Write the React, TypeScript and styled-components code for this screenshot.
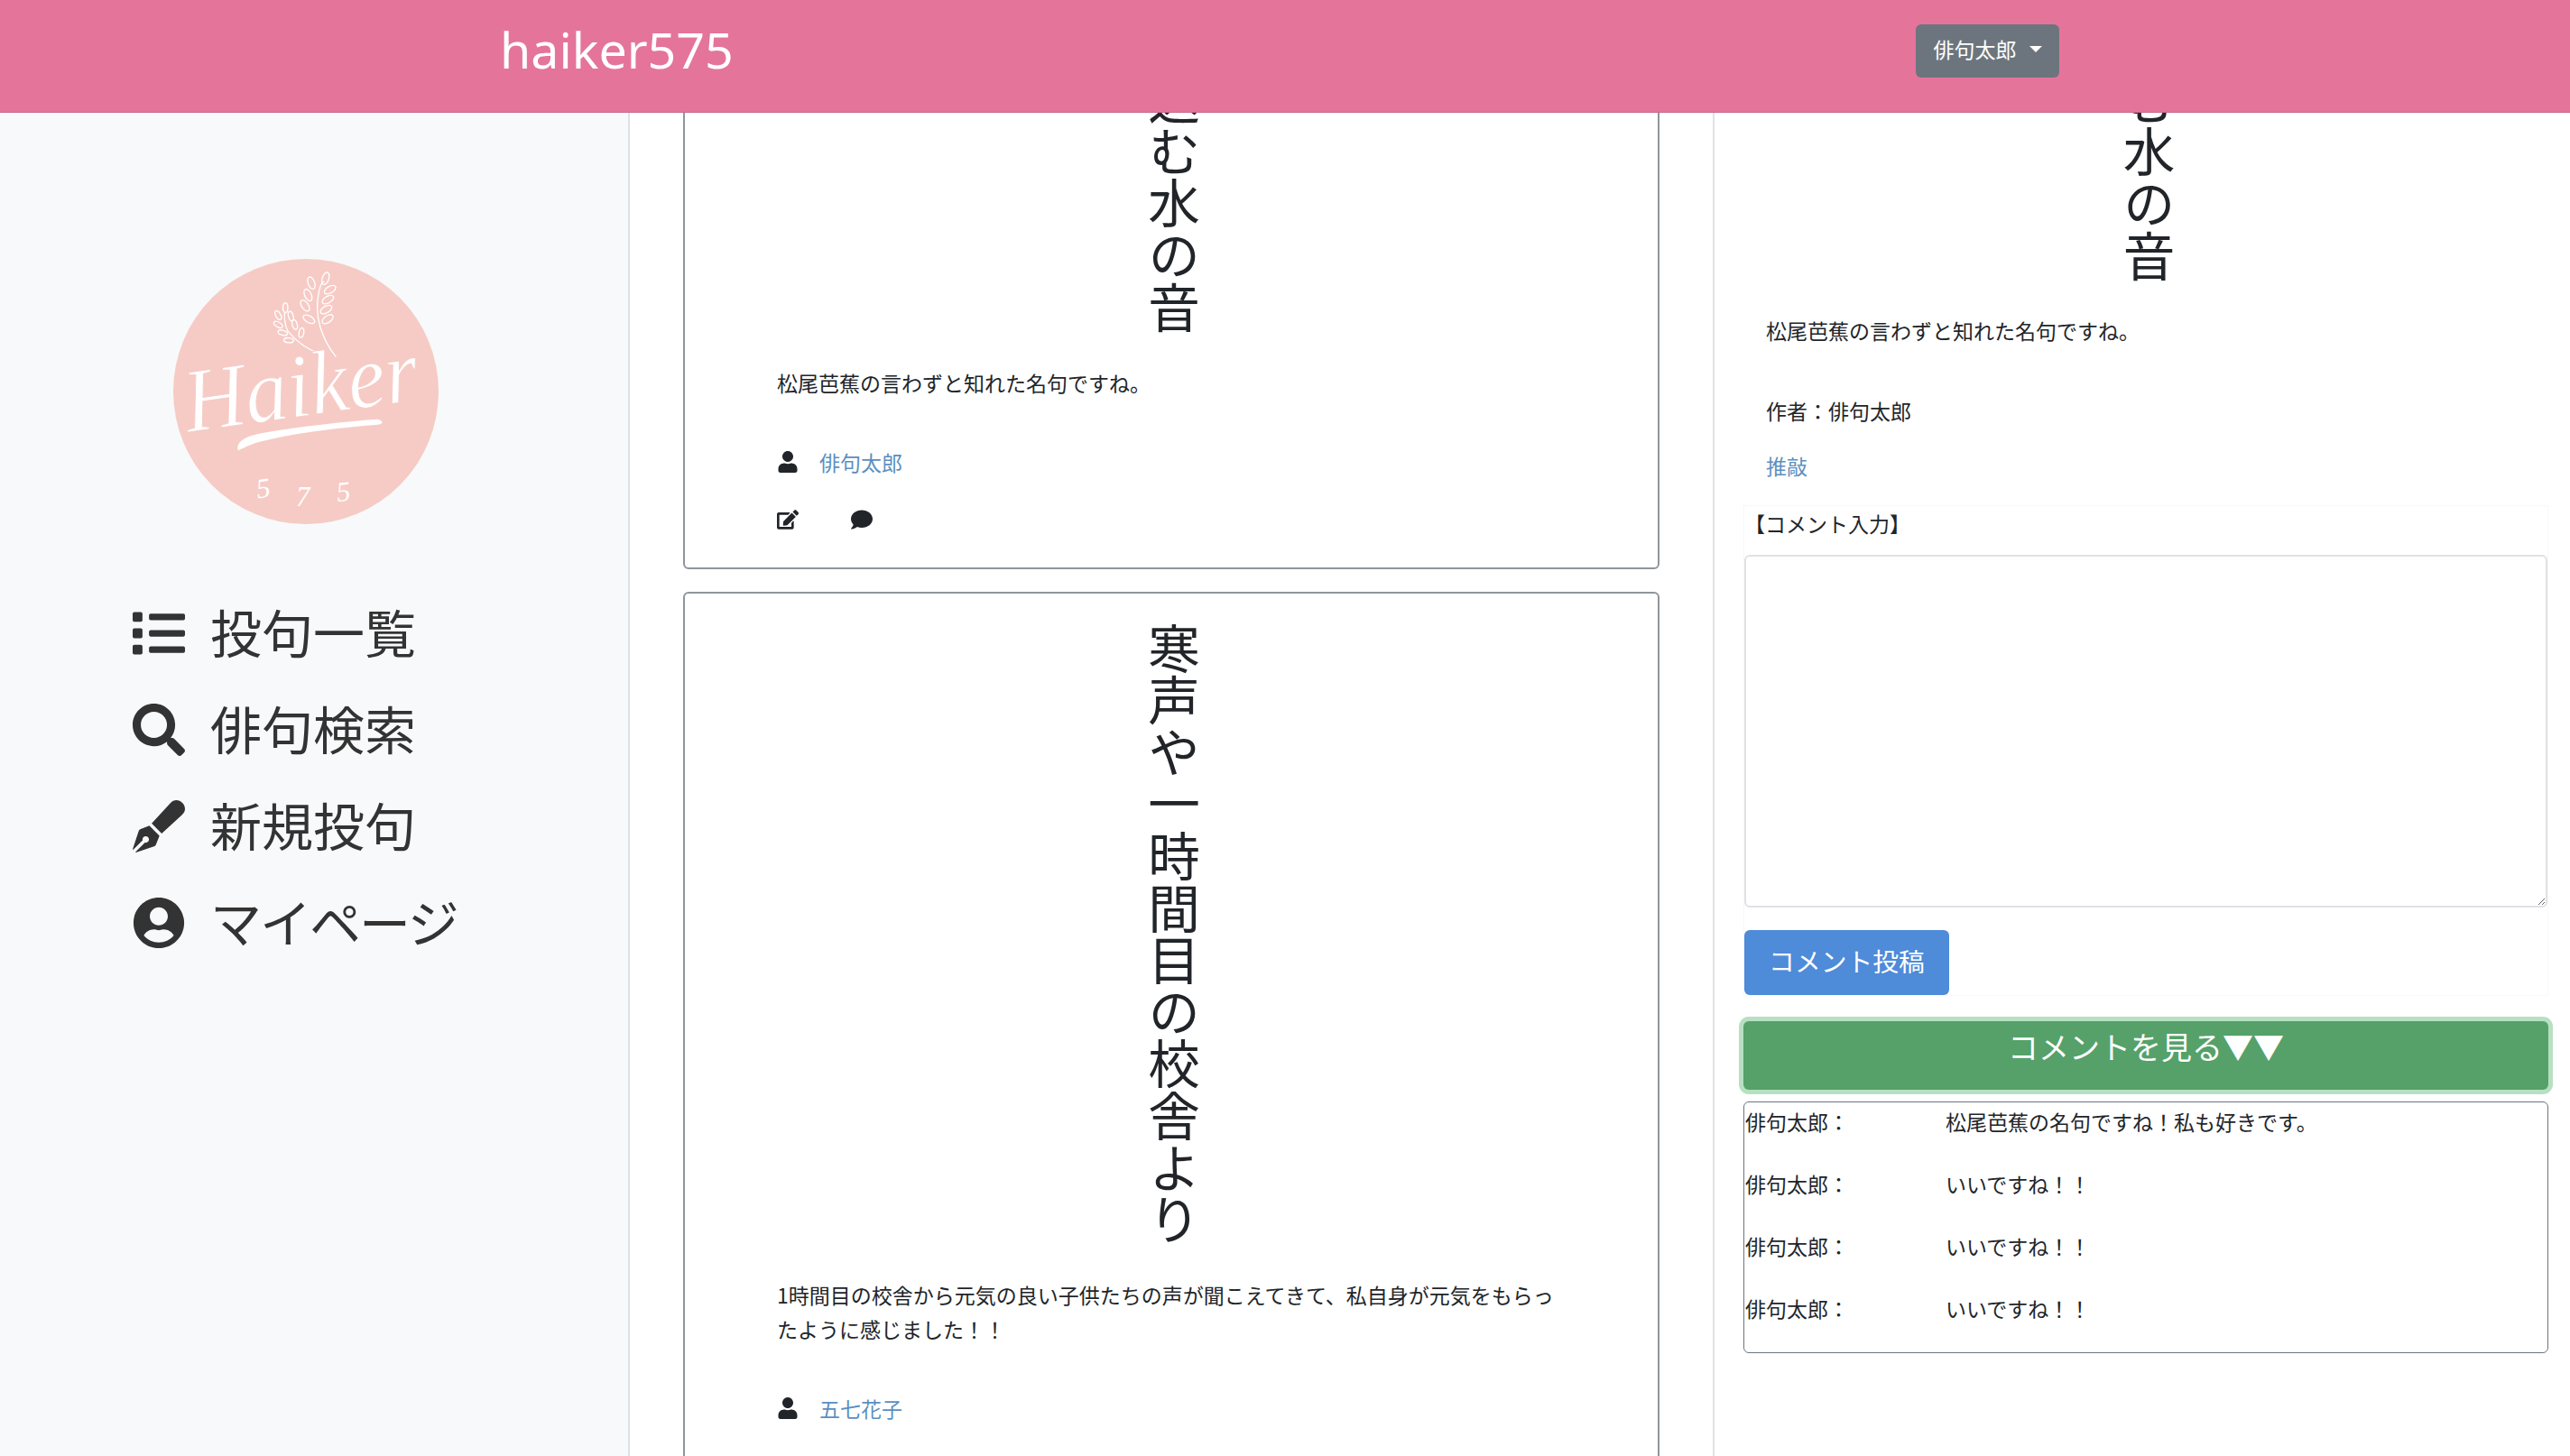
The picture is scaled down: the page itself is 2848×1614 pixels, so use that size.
import React from "react";
import styled, { createGlobalStyle } from "styled-components";
import {
  FaList,
  FaSearch,
  FaPenFancy,
  FaUserCircle,
  FaUser,
  FaEdit,
  FaComment,
} from "react-icons/fa";

const GlobalStyle = createGlobalStyle`
  * { box-sizing: border-box; }
  html, body {
    margin: 0;
    height: 100%;
    overflow: hidden;
    background: #fff;
    color: #212529;
    font-family: "Noto Sans CJK JP", "Liberation Sans", sans-serif;
  }
`;

const Page = styled.div`
  width: 2848px;
  height: 1614px;
  display: flex;
  flex-direction: column;
  overflow: hidden;
`;

const Header = styled.header`
  flex: 0 0 125px;
  background: #e5749a;
  border-bottom: 1px solid #c9688a;
  display: flex;
  align-items: flex-start;
  padding-left: 554px;
`;

const Brand = styled.div`
  width: 1569px;
  margin-top: 19px;
  font-family: "Noto Sans", sans-serif;
  font-size: 55.5px;
  line-height: 72px;
  color: #fff;
`;

const UserMenu = styled.button`
  margin-top: 27px;
  width: 159px;
  height: 59px;
  display: flex;
  align-items: center;
  justify-content: center;
  gap: 14px;
  padding: 0 0 5px;
  border: 0;
  border-radius: 6px;
  background: #6c757d;
  color: #fff;
  font: 23px/1 "Noto Sans CJK JP", sans-serif;
`;

const Caret = styled.span`
  width: 0;
  height: 0;
  border-left: 7px solid transparent;
  border-right: 7px solid transparent;
  border-top: 7px solid #fff;
`;

const Body = styled.div`
  flex: 1;
  display: flex;
  min-height: 0;
`;

const Sidebar = styled.aside`
  flex: 0 0 698px;
  background: #f8f9fa;
  border-right: 2px solid #dee2e6;
  padding: 162px 0 0 147px;
`;

const Logo = styled.svg`
  display: block;
  width: 294px;
  height: 294px;
  margin-left: 45px;
`;

const Nav = styled.nav`
  margin-top: 67px;
  display: flex;
  flex-direction: column;
`;

const NavItem = styled.a`
  height: 107px;
  display: flex;
  align-items: center;
  gap: 28px;
  color: #333;
  svg {
    flex: 0 0 58px;
  }
`;

const NavLabel = styled.span<{ $tight?: boolean }>`
  font-size: 57px;
  line-height: 1;
  margin-top: -4px;
  letter-spacing: ${(p) => (p.$tight ? "-2px" : "0")};
`;

const Feed = styled.main`
  flex: 0 0 1202px;
  border-right: 2px solid #dee2e6;
  overflow: hidden;
  padding-left: 59px;
`;

const FeedInner = styled.div`
  width: 1082px;
  margin-top: -423px;
  display: flex;
  flex-direction: column;
  gap: 25px;
`;

const Card = styled.article`
  border: 2px solid #8f969c;
  border-radius: 6px;
  padding: 32px 103px 39px 102px;
`;

const Poem = styled.h2<{ $chars: number }>`
  margin: 0 auto;
  writing-mode: vertical-rl;
  font-size: 57.6px;
  line-height: 58px;
  font-weight: 400;
  color: #212529;
  height: ${(p) => p.$chars * 57.6}px;
  width: 65px;
  white-space: nowrap;
`;

const Summary = styled.p`
  margin: 35px 0 0;
  font-size: 23px;
  line-height: 38px;
`;

const Author = styled.div`
  margin-top: 50px;
  display: flex;
  align-items: center;
  gap: 23px;
  height: 38px;
  font-size: 23px;
`;

const UserLink = styled.a`
  color: #5b8fc0;
`;

const Actions = styled.div`
  margin-top: 31px;
  display: flex;
  align-items: center;
  gap: 58px;
  height: 28px;
`;

const Detail = styled.section`
  flex: 1;
  overflow: hidden;
  padding: 0 24px 0 32px;
`;

const DetailInner = styled.div`
  margin-top: -446px;
`;

const DetailText = styled.div`
  padding-left: 25px;
  font-size: 23px;
  line-height: 38px;
`;

const DetailBody = styled(DetailText)`
  margin-top: 34px;
`;

const DetailAuthor = styled(DetailText)`
  margin-top: 51px;
`;

const DetailLink = styled(DetailText)`
  margin-top: 23px;
  color: #5b8fc0;
`;

const CommentForm = styled.form`
  margin-top: 25px;
  border: 1px solid #f8f8f8;
  display: flex;
  flex-direction: column;
`;

const FormLabel = styled.label`
  font-size: 23px;
  line-height: 38px;
  margin-bottom: 16px;
  display: block;
`;

const TextArea = styled.textarea`
  display: block;
  width: 100%;
  height: 391px;
  resize: vertical;
  border: 2px solid #dfe2e5;
  border-radius: 6px;
  background: #fff;
  outline: none;
`;

const SubmitButton = styled.button`
  margin-top: 25px;
  width: 227px;
  height: 72px;
  border: 0;
  border-radius: 6px;
  background: #4e8bd8;
  color: #fff;
  font: 28.8px/1 "Noto Sans CJK JP", sans-serif;
  padding: 0 0 3px;
`;

const ToggleButton = styled.button`
  display: block;
  margin-top: 28px;
  width: 100%;
  height: 76px;
  border: 0;
  border-radius: 6px;
  background: #55a169;
  box-shadow: 0 0 0 5px #b7e0c3;
  color: #fff;
  font: 34px/1 "Noto Sans CJK JP", sans-serif;
  padding: 0 0 20px;
`;

const CommentBox = styled.div`
  margin-top: 13px;
  height: 279px;
  border: 1px solid #6c757d;
  border-radius: 6px;
  padding: 2px 0 0 1px;
  display: flex;
  flex-direction: column;
  gap: 31px;
`;

const CommentRow = styled.div`
  display: grid;
  grid-template-columns: 222px 1fr;
  font-size: 23px;
  line-height: 38px;
`;

const leaves = [
  [570, 115, 20], [523, 130, -20], [585, 152, 60], [512, 170, -25],
  [578, 185, 60], [502, 205, -35], [572, 218, 60], [515, 250, -60], [577, 250, 55],
];
const smallLeaves = [
  [437, 212, 0], [413, 237, -30], [455, 240, -15], [413, 268, -60],
  [468, 268, -15], [428, 295, -75], [490, 295, 10], [448, 320, -85],
];

const comments = [
  "松尾芭蕉の名句ですね！私も好きです。",
  "いいですね！！",
  "いいですね！！",
  "いいですね！！",
];

export default function App() {
  return (
    <Page>
      <GlobalStyle />
      <Header>
        <Brand>haiker575</Brand>
        <UserMenu>
          俳句太郎
          <Caret />
        </UserMenu>
      </Header>
      <Body>
        <Sidebar>
          <Logo viewBox="65 50 880 880">
            <circle cx="505" cy="490" r="440" fill="#f6cbc5" />
            <g fill="none" stroke="#fff" strokeWidth="4">
              <path d="M605 375 C560 320 530 240 548 160 C552 140 558 125 566 125" />
              <path d="M550 365 C510 350 470 320 445 290 C435 270 432 240 435 228" />
              {leaves.map(([x, y, r], i) => (
                <ellipse key={i} cx={x} cy={y} rx="11" ry="21" transform={`rotate(${r} ${x} ${y})`} />
              ))}
              {smallLeaves.map(([x, y, r], i) => (
                <ellipse key={i} cx={x} cy={y} rx="8" ry="16" transform={`rotate(${r} ${x} ${y})`} />
              ))}
            </g>
            <text
              x="115"
              y="625"
              fill="#fff"
              stroke="#f6cbc5"
              strokeWidth="3"
              fontFamily="'Liberation Serif', serif"
              fontStyle="italic"
              fontSize="300"
              textLength="780"
              lengthAdjust="spacingAndGlyphs"
              transform="rotate(-8 115 625)"
            >
              Haiker
            </text>
            <path
              d="M280 685 C272 660 300 640 350 630 C480 605 640 590 740 582 C762 585 764 597 745 600 C620 610 470 625 340 660 C315 668 295 680 280 685Z"
              fill="#fff"
            />
            <text x="345" y="845" fill="#fff" fontFamily="'Liberation Serif', serif" fontStyle="italic" fontSize="92" transform="rotate(-8 345 845)">5</text>
            <text x="472" y="870" fill="#fff" fontFamily="'Liberation Serif', serif" fontStyle="italic" fontSize="92">7</text>
            <text x="610" y="855" fill="#fff" fontFamily="'Liberation Serif', serif" fontStyle="italic" fontSize="92" transform="rotate(-6 610 855)">5</text>
          </Logo>
          <Nav>
            <NavItem><FaList size={58} /><NavLabel>投句一覧</NavLabel></NavItem>
            <NavItem><FaSearch size={58} /><NavLabel>俳句検索</NavLabel></NavItem>
            <NavItem><FaPenFancy size={58} /><NavLabel>新規投句</NavLabel></NavItem>
            <NavItem><FaUserCircle size={58} /><NavLabel $tight>マイページ</NavLabel></NavItem>
          </Nav>
        </Sidebar>
        <Feed>
          <FeedInner>
            <Card>
              <Poem $chars={11}>古池や蛙飛び込む水の音</Poem>
              <Summary>松尾芭蕉の言わずと知れた名句ですね。</Summary>
              <Author>
                <FaUser size={24} />
                <UserLink>俳句太郎</UserLink>
              </Author>
              <Actions>
                <FaEdit size={24} />
                <FaComment size={24} />
              </Actions>
            </Card>
            <Card>
              <Poem $chars={12}>寒声や一時間目の校舎より</Poem>
              <Summary>
                1時間目の校舎から元気の良い子供たちの声が聞こえてきて、私自身が元気をもらったように感じました！！
              </Summary>
              <Author>
                <FaUser size={24} />
                <UserLink>五七花子</UserLink>
              </Author>
              <Actions>
                <FaEdit size={24} />
                <FaComment size={24} />
              </Actions>
            </Card>
          </FeedInner>
        </Feed>
        <Detail>
          <DetailInner>
            <Poem $chars={11}>古池や蛙飛び込む水の音</Poem>
            <DetailBody>松尾芭蕉の言わずと知れた名句ですね。</DetailBody>
            <DetailAuthor>作者：俳句太郎</DetailAuthor>
            <DetailLink>推敲</DetailLink>
            <CommentForm>
              <FormLabel>【コメント入力】</FormLabel>
              <TextArea />
              <div>
                <SubmitButton type="button">コメント投稿</SubmitButton>
              </div>
            </CommentForm>
            <ToggleButton type="button">コメントを見る▼▼</ToggleButton>
            <CommentBox>
              {comments.map((c, i) => (
                <CommentRow key={i}>
                  <span>俳句太郎：</span>
                  <span>{c}</span>
                </CommentRow>
              ))}
            </CommentBox>
          </DetailInner>
        </Detail>
      </Body>
    </Page>
  );
}
